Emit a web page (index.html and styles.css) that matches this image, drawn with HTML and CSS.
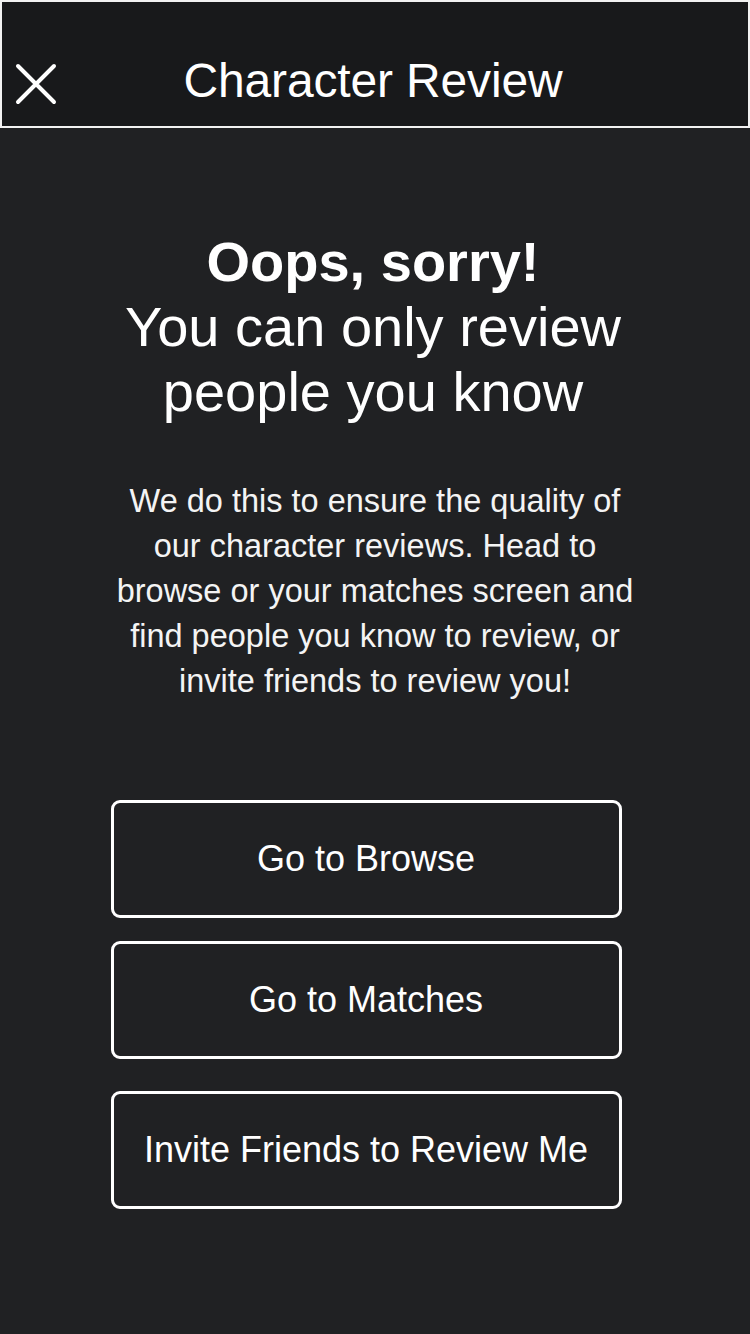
FILE: index.html
```html
<!DOCTYPE html>
<html lang="en">
<head>
<meta charset="utf-8">
<title>Character Review</title>
<link rel="stylesheet" href="styles.css">
</head>
<body>
<div class="screen">
  <header class="topbar">
    <button class="close" aria-label="Close">
      <svg width="44" height="42" viewBox="0 0 44 42"><path d="M4 3 L40 39 M40 3 L4 39" stroke="#fff" stroke-width="4" stroke-linecap="round" fill="none"/></svg>
    </button>
    <h1 class="title">Character Review</h1>
  </header>
  <main class="content">
    <h2 class="headline"><strong>Oops, sorry!</strong><br>You can only review<br>people you know</h2>
    <p class="message">We do this to ensure the quality of our character reviews. Head to browse or your matches screen and find people you know to review, or invite friends to review you!</p>
    <div class="actions">
      <button class="btn">Go to Browse</button>
      <button class="btn">Go to Matches</button>
      <button class="btn btn-last">Invite Friends to Review Me</button>
    </div>
  </main>
</div>
</body>
</html>
```
FILE: styles.css
```css
* { box-sizing: border-box; }
html, body { margin: 0; padding: 0; }
body {
  background: #202123;
  font-family: "Liberation Sans", Arial, sans-serif;
  color: #fff;
  width: 750px;
  height: 1334px;
  overflow: hidden;
}
.screen { width: 750px; min-height: 1334px; background: #202123; }
.topbar {
  position: relative;
  height: 128px;
  background: #18191b;
  border: 2px solid #f2f2f2;
  display: flex;
  align-items: flex-end;
  justify-content: center;
  padding-bottom: 15px;
}
.close {
  position: absolute;
  left: 12px;
  top: 61px;
  background: none;
  border: 0;
  padding: 0;
  width: 44px;
  height: 42px;
  display: block;
}
.close svg { display: block; }
.title {
  margin: 0 4px 0 0;
  font-weight: normal;
  font-size: 48px;
  letter-spacing: -0.15px;
  line-height: 60px;
}
.content {
  display: flex;
  flex-direction: column;
  align-items: center;
}
.headline {
  margin: 101px 4px 0 0;
  font-weight: normal;
  font-size: 56px;
  line-height: 65px;
  text-align: center;
}
.headline strong { font-weight: bold; }
.message {
  margin: 55px 0 0 0;
  width: 530px;
  font-size: 32.5px;
  line-height: 45px;
  text-align: center;
  color: #f4f4f4;
}
.actions {
  margin: 96px 0 0 -18px;
  display: flex;
  flex-direction: column;
  align-items: stretch;
  width: 511px;
}
.btn {
  height: 118px;
  background: transparent;
  border: 3px solid #fff;
  border-radius: 9px;
  color: #fff;
  font-family: "Liberation Sans", Arial, sans-serif;
  font-size: 36px;
  padding: 0;
  margin-bottom: 23px;
}
.btn:nth-child(2) { margin-bottom: 32px; }
.btn-last { margin-bottom: 0; }
```
